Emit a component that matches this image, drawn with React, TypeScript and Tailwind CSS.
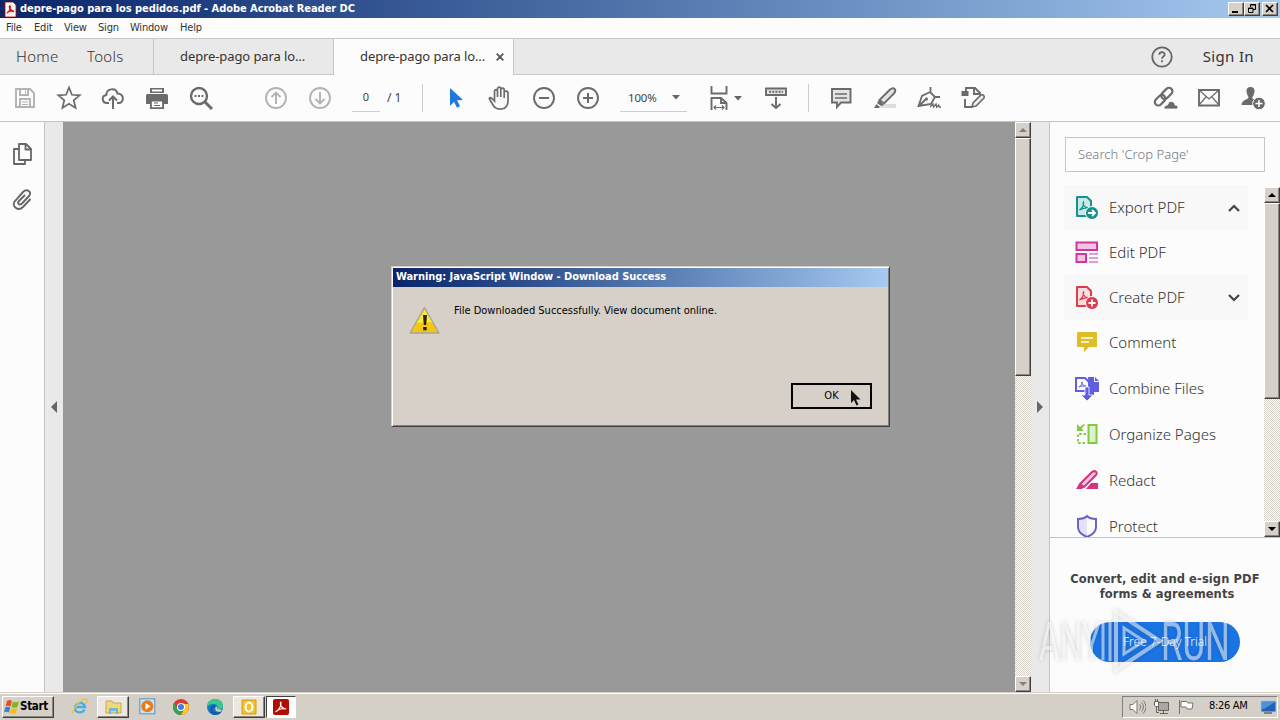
import type { ReactNode } from 'react';

const menus = [
    { label: 'File', className: 'w-[28px]' },
    { label: 'Edit', className: 'w-[30px]' },
    { label: 'View', className: 'w-[34px]' },
    { label: 'Sign', className: 'w-[32px]' },
    { label: 'Window', className: 'w-[50px]' },
    { label: 'Help', className: 'w-[30px]' },
];

const Raised = ({ className = '', children }: { className?: string; children?: ReactNode }) => (
    <div
        className={`flex shrink-0 items-center justify-center border border-t-white border-r-[#404040] border-b-[#404040] border-l-white bg-[#d6d0c8] shadow-[inset_-1px_-1px_0_#8a8680] ${className}`}
    >
        {children}
    </div>
);

const Tool = ({ children }: { children: ReactNode }) => (
    <button className="flex h-full w-11 shrink-0 items-center justify-center">
        <svg width="26" height="26" viewBox="0 0 26 26" fill="none" stroke="#6b6b6b" strokeWidth="1.9">
            {children}
        </svg>
    </button>
);

const Caret = () => (
    <svg width="8" height="5" viewBox="0 0 8 5">
        <path d="M0 0h8L4 4.6z" fill="#666" />
    </svg>
);

function TitleBar() {
    return (
        <div className="flex h-[18px] items-center bg-linear-to-r from-[#0a246a] to-[#a6caf0] pr-[2px] pl-1">
            <svg width="13" height="15" viewBox="0 0 13 15">
                <path d="M1 0h8l3 3v12H1z" fill="#fdf3f1" stroke="#b30b00" strokeWidth=".8" />
                <path
                    d="M3 11c3-2 3.500-5 3-7-1.200 0-.6 4.500 4 5.500C8 8.500 4.500 9 3 11z"
                    fill="none"
                    stroke="#d01c10"
                    strokeWidth="1.500"
                />
            </svg>
            <span className="ml-[3px] font-[DejaVu_Sans_Condensed,DejaVu_Sans,sans-serif] text-[11px] font-bold tracking-[-0.05px] whitespace-nowrap text-white">
                depre-pago para los pedidos.pdf - Adobe Acrobat Reader DC
            </span>
            <div className="ml-auto flex">
                <Raised className="h-[14px] w-4">
                    <svg width="10" height="10">
                        <path d="M1 7h6v2H1z" />
                    </svg>
                </Raised>
                <Raised className="h-[14px] w-4">
                    <svg width="10" height="10" fill="none" stroke="#000">
                        <path d="M3.500 3V.5h5v5H6M3 1h6" />
                        <path d="M1.500 4h4.500v4.500H1.500zM1 4.500h5" />
                    </svg>
                </Raised>
                <Raised className="ml-[2px] h-[14px] w-4">
                    <svg width="10" height="10" stroke="#000" strokeWidth="1.600">
                        <path d="M1 1l7 7M8 1l-7 7" />
                    </svg>
                </Raised>
            </div>
        </div>
    );
}

function TabBar() {
    return (
        <div className="flex h-[37px] border-t border-[#c8c8c8] bg-[#e9e9e9] font-[Noto_Sans,sans-serif] text-[#333]">
            <div className="flex w-[154px] items-center border-r border-b border-[#c8c8c8] pl-4 text-[15px] font-light tracking-[0.3px]">
                <span className="w-[71px]">Home</span>
                <span>Tools</span>
            </div>
            <div className="flex w-[180px] items-center border-r border-b border-[#c8c8c8] pl-[26px] text-[13px] tracking-[-0.1px]">
                depre-pago para lo...
            </div>
            <div className="flex w-[180px] items-center border-r border-[#c8c8c8] bg-[#fcfcfc] pl-[26px] text-[13px] tracking-[-0.1px]">
                <span className="w-[136px] whitespace-nowrap">depre-pago para lo...</span>
                <svg width="8" height="8" stroke="#555" strokeWidth="1.800">
                    <path d="M.7.7l6.600 6.600M7.300.7L.7 7.300" />
                </svg>
            </div>
            <div className="flex flex-1 items-center justify-end border-b border-[#c8c8c8] pr-[26px]">
                <svg width="22" height="22" viewBox="0 0 22 22" fill="none" stroke="#666" strokeWidth="1.800">
                    <circle cx="11" cy="11" r="9.700" />
                    <path d="M8.300 8.700c.2-3.500 5.600-3.200 5.400 0-.2 1.700-2.700 1.800-2.700 4.100M11 14.200v2" />
                </svg>
                <span className="ml-[30px] text-[15px] tracking-[0.35px]">Sign In</span>
            </div>
        </div>
    );
}

function Toolbar() {
    return (
        <div className="flex h-[47px] items-center border-b border-[#c4c4c4] bg-[#fcfcfc] pr-[5px] pl-[3px] font-[Noto_Sans,sans-serif] text-[12px] text-[#444]">
            <Tool>
                <g stroke="#b3b3b3">
                    <path d="M4 4h14l4 4v14H4zM8 4v6h8V4M8 22v-8h10v8" />
                    <path d="M13.500 5.500v3M10 17h6M10 19.500h6" strokeWidth="1" />
                </g>
            </Tool>
            <Tool>
                <path d="M13 2.500l2.900 7.300 7.800.5-6 5 1.900 7.700-6.600-4.200L6.400 23l1.900-7.700-6-5 7.800-.5z" strokeWidth="1.700" />
            </Tool>
            <Tool>
                <path d="M9 18H7c-5 0-6-7-.7-8C6.500 3 16 2.500 17.500 8.500c7 0 7 9.500 1 9.500H17" strokeWidth="2" />
                <path d="M13 24V12M9 15.500l4-4 4 4" strokeWidth="2" />
            </Tool>
            <Tool>
                <path d="M6 3h14v5H6z" fill="#6b6b6b" stroke="none" />
                <path d="M2 11c0-2 1-2 2-2h18c2 0 2 1 2 2v8h-4v-3H6v3H2z" fill="#6b6b6b" stroke="none" />
                <path d="M6.900 15.500h12.200v7.600H6.900z" fill="#fcfcfc" />
                <path d="M10 18h4M10 20.500h6M7.500 6.500h11" strokeWidth="1.200" />
                <path d="M8 5.500h10" stroke="#fff" strokeWidth="2" />
            </Tool>
            <Tool>
                <circle cx="11" cy="11" r="8" strokeWidth="2.400" />
                <path d="M17 17l7 7" strokeWidth="3" />
                <path d="M6.500 11h2M10 11h2M13.500 11h2" />
            </Tool>
            <div className="w-[31px]" />
            <Tool>
                <g stroke="#b3b3b3">
                    <circle cx="13" cy="13" r="10" />
                    <path d="M13 19V7.500M8.500 12L13 7.500l4.500 4.500" />
                </g>
            </Tool>
            <Tool>
                <g stroke="#b3b3b3">
                    <circle cx="13" cy="13" r="10" />
                    <path d="M13 7v11.500M8.500 14l4.500 4.500 4.500-4.500" />
                </g>
            </Tool>
            <div className="ml-[10px] flex h-[27px] w-7 items-center justify-center border-b border-[#ccc] text-[11px]">0</div>
            <span className="ml-[7px] w-[17px] text-[12px] whitespace-pre">/ 1</span>
            <div className="ml-[18px] h-7 w-px bg-[#ccc]" />
            <div className="w-[11px]" />
            <Tool>
                <path d="M7 3l13 12-6 .3 3 6-3 1.500-3-6L7 21z" fill="#1f78dd" stroke="none" />
            </Tool>
            <Tool>
                <path
                    d="M7.500 16V6.500c0-2.500 3-2.500 3 0V12 4c0-2.500 3.300-2.500 3.300 0v8-7c0-2.500 3.400-2.500 3.400 0v8-5c0-2.500 3.800-2.500 3.800 0v8c0 10-12 10-15 4l-3.500-6c-.5-2 1.500-2.500 5 2z"
                    strokeWidth="1.700"
                />
            </Tool>
            <Tool>
                <circle cx="13" cy="13" r="10" />
                <path d="M8 13h10" strokeWidth="2" />
            </Tool>
            <Tool>
                <circle cx="13" cy="13" r="10" />
                <path d="M8 13h10M13 8v10" strokeWidth="2" />
            </Tool>
            <div className="ml-[10px] flex h-[27px] w-[67px] items-center justify-between border-b border-[#ccc] pr-[7px] pl-2 text-[11.500px]">
                <span className="tracking-[-0.2px]">100%</span>
                <Caret />
            </div>
            <svg className="ml-[22px]" width="20" height="26" viewBox="0 0 20 26" fill="none" stroke="#6b6b6b" strokeWidth="1.900">
                <path d="M2.500 1v7.500h15V1M2.500 25V13h9.500l5.500 5v7M12 13v5h5.500" />
                <path d="M5 22.500h10M7 20.500l-2 2 2 2M13 20.500l2 2-2 2" strokeWidth="1.200" />
            </svg>
            <div className="mr-3 ml-[5px]">
                <Caret />
            </div>
            <Tool>
                <path d="M3 3.500h20v6.500H3z" fill="#e4e4e4" />
                <path d="M6 6.800h14" strokeWidth="2" strokeDasharray="2 1.200" />
                <path d="M13 12v11M8.500 19l4.500 4 4.500-4" />
            </Tool>
            <div className="mr-[10px] ml-[10px] h-7 w-px bg-[#ccc]" />
            <Tool>
                <path d="M4 4h18.500v13.500H13L9 22v-4.500H4z" fill="#e4e4e4" />
                <path d="M7 9h12M7 13h12" strokeWidth="1.300" />
            </Tool>
            <Tool>
                <path d="M10 19h14v4H8z" fill="#dedede" stroke="none" />
                <path d="M7.500 15L18 4.500c4-3 7 0 4 4L12 18.500z" fill="#e4e4e4" />
                <path d="M7 15l5 5-3 1-4-3zM2 23l2.500-4L8 22l-1 1z" fill="#6b6b6b" stroke="none" />
            </Tool>
            <Tool>
                <path d="M2.500 21L6 11l8-4 5 5-4 7zM3 21l8-8M14.500 7V2M19 12h5" strokeWidth="1.800" />
                <circle cx="10.500" cy="14" r="1.500" fill="#6b6b6b" stroke="none" />
                <path d="M14 22l3-3 .5 3 2.500-3 .7 3 2-2 .5 2H25" strokeWidth="1.400" />
            </Tool>
            <Tool>
                <path d="M6 6V3h9l5 5v2M14 3v6h5M5 14v8h7" />
                <path d="M1.500 6h7v5h-7z" fill="#6b6b6b" stroke="none" />
                <path d="M12 22l1-4 8-8c2-1 4 1 3 3l-8 8z" fill="#eee" strokeWidth="1.600" />
            </Tool>
            <div className="ml-auto flex h-full">
                <Tool>
                    <g transform="rotate(-45 12 12)">
                        <rect x="1" y="8" width="12" height="7" rx="3.500" strokeWidth="2.200" />
                        <rect x="10" y="8" width="13" height="7" rx="3.500" strokeWidth="2.200" />
                    </g>
                    <path d="M12 24c0-5 4-3 4-5 1-4 7-3 7 1 4 0 3 4 2 4z" fill="#6b6b6b" stroke="#fcfcfc" strokeWidth=".8" />
                </Tool>
                <Tool>
                    <path d="M3 5h20v15.500H3z" />
                    <path d="M3 5l10 9 10-9M3 20l7-8M23 20l-7-8" strokeWidth="1.200" />
                </Tool>
                <Tool>
                    <path
                        d="M10.500 2C4.500 2 6.500 9 8.500 12c0 3-6.500 2-7 8h13v-6c-2 0-2.500-.5-2-2 2-3 4-10-2-10z"
                        fill="#6b6b6b"
                        stroke="none"
                    />
                    <circle cx="19" cy="18.500" r="6.300" fill="#6b6b6b" stroke="#fcfcfc" strokeWidth="1" />
                    <path d="M15.500 18.500h7M19 15v7" stroke="#fff" strokeWidth="1.500" />
                </Tool>
            </div>
        </div>
    );
}

const Track = ({ children, className = '' }: { children: ReactNode; className?: string }) => (
    <div
        className={`flex w-4 shrink-0 flex-col bg-[#fff] bg-[conic-gradient(#d4d0c8_25%,transparent_0_50%,#d4d0c8_0_75%,transparent_0)] bg-size-[2px_2px] ${className}`}
    >
        {children}
    </div>
);

const Arrow = ({ down = false, dim = false }: { down?: boolean; dim?: boolean }) => (
    <svg width="8" height="4" viewBox="0 0 8 4">
        <path d={down ? 'M0 0h8L4 4z' : 'M0 4h8L4 0z'} fill={dim ? '#808080' : '#000'} />
    </svg>
);

const PdfPage = ({ color, fill, plus = false }: { color: string; fill: string; plus?: boolean }) => (
    <>
        <path d="M2 2h10l4 4v15H2z" fill={fill} stroke={color} strokeWidth="2" strokeLinejoin="round" />
        <path d="M4.500 15c3-2 4.500-5 4-8-1 1-.5 5 5 6-3-.5-6 .5-9 2z" fill="none" stroke={color} strokeWidth="1.200" />
        <circle cx="17" cy="18" r="6.500" fill={color} stroke="#fcfcfc" strokeWidth="1" />
        <path d={plus ? 'M13.500 18h7M17 14.500v7' : 'M13 18h6.500M17 15l3 3-3 3'} fill="none" stroke="#fff" strokeWidth="1.800" />
    </>
);

const tools = [
    { label: 'Export PDF', row: 'h-[45px] bg-[#f8f8f8]', arrow: 'up', icon: <PdfPage color="#159190" fill="#c7e9e8" /> },
    {
        label: 'Edit PDF',
        row: 'h-[45px]',
        icon: (
            <>
                <path d="M1.500 2.500h20.500v7.500H1.500zM1.500 14h9.500v8H1.500z" fill="#f6c3e4" stroke="#d0379c" strokeWidth="2" />
                <path d="M14 14h9M14 18h9M14 22h9" stroke="#d0379c" strokeWidth="1.200" />
            </>
        ),
    },
    { label: 'Create PDF', row: 'h-[45px] bg-[#f8f8f8]', arrow: 'down', icon: <PdfPage color="#dc3d4e" fill="#fbdcdd" plus /> },
    {
        label: 'Comment',
        row: 'h-[45px]',
        icon: (
            <>
                <path d="M3 2h18c1 0 1 1 1 1v13c0 1-1 1-1 1h-7l-5 5v-5H3c-1 0-1-1-1-1V3s0-1 1-1z" fill="#e0bd27" />
                <path d="M6 8h12M6 12h8" stroke="#fff" strokeWidth="1.600" />
            </>
        ),
    },
    {
        label: 'Combine Files',
        row: 'h-[46px]',
        icon: (
            <>
                <path d="M13 1h6v5h5v10h-5v3h-5z" fill="#615de0" />
                <path d="M20 1l4 4h-4z" fill="#615de0" />
                <path d="M1 2h9l4 4v9H1z" fill="#fcfcfc" stroke="#615de0" strokeWidth="2" />
                <path d="M4 11c2-1 3-3 3-5 0 3 2 4 4 4-3 0-5 0-7 1z" fill="none" stroke="#615de0" />
                <path d="M10 11h4v8h4l-6 6-6-6h4z" fill="#615de0" stroke="#fcfcfc" strokeWidth=".8" />
            </>
        ),
    },
    {
        label: 'Organize Pages',
        row: 'h-[46px]',
        icon: (
            <>
                <path d="M13.500 3h8v18h-8z" fill="#ddf2c8" stroke="#83c744" strokeWidth="2" />
                <path d="M11 12H3v9h8" fill="none" stroke="#83c744" strokeWidth="1.800" strokeDasharray="2.500 1.800" />
                <path d="M2 2v7h7l-2.500-2.500L10 3 9 2 5 5z" fill="#83c744" />
            </>
        ),
    },
    {
        label: 'Redact',
        row: 'h-[46px]',
        icon: (
            <>
                <path d="M1 21l3-5 5 3-2 2zM11 21l5-6h7v6z" fill="#d3357f" />
                <path d="M5 16L17 4c3-2 6 0 4 3L9 19z" fill="#f7c6dd" stroke="#d3357f" strokeWidth="2" />
            </>
        ),
    },
    {
        label: 'Protect',
        row: 'h-[46px]',
        icon: (
            <>
                <path d="M3 5c4 0 7-1 9-3 2 2 5 3 9 3v8c0 5-4 8-9 10-5-2-9-5-9-10z" fill="#fcfcfc" />
                <path d="M12 2v21c-5-2-9-5-9-10V5c4 0 7-1 9-3z" fill="#e3e2fa" />
                <path d="M3 5c4 0 7-1 9-3 2 2 5 3 9 3v8c0 5-4 8-9 10-5-2-9-5-9-10z" fill="none" stroke="#625fc9" strokeWidth="1.900" />
            </>
        ),
    },
];

function ToolsPanel() {
    return (
        <aside className="flex w-[231px] shrink-0 flex-col border-l border-[#c4c4c4] bg-[#fcfcfc] font-[Noto_Sans,sans-serif]">
            <div className="mx-[15px] mt-[15px] flex h-[35px] shrink-0 items-center border border-[#c6c6c6] pl-3 text-[13px] font-light tracking-[0.05px] text-[#777]">
                Search 'Crop Page'
            </div>
            <div className="mt-[13px] flex h-[353px] shrink-0 overflow-hidden border-b border-[#c4c4c4]">
                <div className="ml-[14px] w-[184px]">
                    {tools.map((tool) => (
                        <div key={tool.label} className={`flex items-center pr-2 pl-[11px] text-[15px] font-light text-[#333] ${tool.row}`}>
                            <svg width="24" height="25" viewBox="0 0 24 25" className="shrink-0">
                                {tool.icon}
                            </svg>
                            <span className="ml-[10px] whitespace-nowrap">{tool.label}</span>
                            {tool.arrow && (
                                <svg className="ml-auto" width="12" height="8" fill="none" stroke="#444" strokeWidth="2.200">
                                    <path d={tool.arrow === 'up' ? 'M1 7l5-5 5 5' : 'M1 1l5 5 5-5'} />
                                </svg>
                            )}
                        </div>
                    ))}
                </div>
                <Track className="mt-[2px] ml-auto">
                    <Raised className="h-4">
                        <Arrow />
                    </Raised>
                    <Raised className="h-[196px]" />
                    <Raised className="mt-auto h-4">
                        <Arrow down />
                    </Raised>
                </Track>
            </div>
            <p className="mt-[34px] text-center font-[DejaVu_Sans,sans-serif] text-[11.500px] leading-[15px] font-bold tracking-[0.1px] text-[#444]">
                Convert, edit and e-sign PDF
                <br />
                &nbsp;forms &amp; agreements
            </p>
            <button className="mt-5 ml-10 h-10 w-[150px] rounded-full bg-[#1b74e4] text-[12px] font-light text-white">Free 7-Day Trial</button>
        </aside>
    );
}

function Watermark() {
    return (
        <svg
            className="absolute top-[604px] left-[1034px] drop-shadow-[0_0_2px_rgba(0,0,0,0.3)]"
            width="206"
            height="74"
            fill="#fff"
            fillOpacity=".55"
            fontFamily="Roboto, sans-serif"
            fontSize="53"
        >
            <text x="5" y="56" textLength="62" lengthAdjust="spacingAndGlyphs">
                ANY
            </text>
            <text x="127" y="56" textLength="69" lengthAdjust="spacingAndGlyphs">
                RUN
            </text>
            <g fill="none" stroke="#fff" strokeOpacity=".55" strokeWidth="4">
                <path d="M69 18v38M76 17v40" strokeWidth="3" />
                <path d="M82 8l44 29-44 29z" />
                <path d="M90 24v26l20-13z" strokeWidth="3" />
            </g>
        </svg>
    );
}

function WarningDialog() {
    return (
        <div className="absolute top-[266px] left-[391px] flex h-[161px] w-[499px] flex-col border border-t-[#d4d0c8] border-r-[#404040] border-b-[#404040] border-l-[#d4d0c8] bg-[#d6d0c9] p-px shadow-[inset_1px_1px_0_#fff,inset_-1px_-1px_0_#808080]">
            <div className="flex h-[19px] items-center bg-linear-to-r from-[#0a246a] to-[#a6caf0] pl-[3px] font-[DejaVu_Sans_Condensed,DejaVu_Sans,sans-serif] text-[11px] font-bold tracking-[-0.05px] text-white">
                Warning: JavaScript Window - Download Success
            </div>
            <div className="flex pt-[17px] pl-4">
                <svg className="mt-[2px]" width="31" height="29" viewBox="0 0 31 29">
                    <path d="M15.500 1.500L30 27H1z" fill="#f3c613" stroke="#a4a4a4" strokeWidth="1.300" strokeLinejoin="round" />
                    <path d="M15.500 4L8 17l15-1z" fill="#fbea3a" />
                    <path d="M14 9h4l-.8 10h-2.400z" fill="#2c2606" />
                    <path d="M14.200 21h3.500v3.300h-3.500z" fill="#2c2606" />
                </svg>
                <p className="ml-[14px] font-[DejaVu_Sans_Condensed,DejaVu_Sans,sans-serif] text-[11px] leading-[14px] text-black">
                    File Downloaded Successfully. View document online.
                </p>
            </div>
            <button className="mt-auto mr-4 mb-4 flex h-[26px] w-[81px] items-center justify-center self-end border-2 border-black font-[DejaVu_Sans_Condensed,DejaVu_Sans,sans-serif] text-[11px]">
                OK
            </button>
            <svg className="absolute top-[122px] left-[458px]" width="12" height="18" viewBox="0 0 12 18">
                <path d="M1 1v13l3-3 2.500 5.500 2-1L6 10.500h4.500z" fill="#111" />
            </svg>
        </div>
    );
}

function AcrobatLogo() {
    return (
        <svg width="16" height="16" viewBox="0 0 16 16">
            <rect width="16" height="16" rx="2" fill="#b30b00" />
            <path
                d="M3 12.500c2.500-.5 5.500-6 5-9.500-1.500 0-.8 6.500 5 7-3-1-8 0-10 2.500z"
                fill="none"
                stroke="#fff"
                strokeWidth="1.100"
            />
        </svg>
    );
}

function Taskbar() {
    return (
        <div className="flex h-7 items-center border-t border-[#d4d0c8] bg-[#d4d0c8] px-[2px] font-[DejaVu_Sans_Condensed,DejaVu_Sans,sans-serif] text-[11px] text-black shadow-[inset_0_1px_0_#fff]">
            <Raised className="mt-px h-[22px] w-[52px] justify-start pl-px">
                <svg width="16" height="16" viewBox="0 0 16 16">
                    <path d="M3 2c2-1.500 3.500-1 5 0L6.500 7.500c-2-1-3.500-1-5 0z" fill="#e45124" />
                    <path d="M9 2.500c2 1 3.500 1 6 0L13.500 8c-2 1-3.500 1-6 0z" fill="#7bb829" />
                    <path d="M1.200 8.500c2-1 3.500-1 5 0L5 13.500c-2-1-3.500-1-5 0z" fill="#3a7fd5" />
                    <path d="M7.200 9c2 1 4 1 6 0L12 14c-2 1-4 1-6 0z" fill="#f6bd19" />
                </svg>
                <span className="text-[11.500px] font-bold tracking-[-0.3px]">Start</span>
            </Raised>
            <svg className="ml-[17px]" width="17" height="17" viewBox="0 0 17 17" fill="none">
                <path d="M13.500 11.500c-2 4-9 4-9.500-1-.5-6 9-8 10-1.500H5" stroke="#45aee8" strokeWidth="2.300" />
                <path d="M2 14c-3 5 4-13 13-13 3 1-1 5-1 5" stroke="#edc53c" strokeWidth="1.300" />
            </svg>
            <Raised className="ml-[9px] h-[22px] w-8 bg-[#ebe8e3]">
                <svg width="17" height="16" viewBox="0 0 17 16">
                    <path d="M1 2h6l1 2h8v10H1z" fill="#f0d77a" stroke="#c9a94b" />
                    <path d="M4 15V9h9v6h-2v-3H6v3z" fill="#6eb8e0" />
                </svg>
            </Raised>
            <svg className="ml-[10px]" width="17" height="17" viewBox="0 0 17 17">
                <rect x=".8" y=".8" width="15" height="15" fill="#c6e3f6" stroke="#5593c3" />
                <circle cx="8.300" cy="8.300" r="6" fill="#ec7b16" />
                <path d="M6.500 5l5 3.300-5 3.400z" fill="#fff" />
            </svg>
            <svg className="ml-[17px]" width="16" height="16" viewBox="0 0 16 16">
                <circle cx="8" cy="8" r="8" fill="#e2382b" />
                <path d="M1 4a8 8 0 0 0 7 12l3.500-6L8 8 4 9z" fill="#32a350" />
                <path d="M15.200 5A8 8 0 0 1 8 16l3.500-6L11 5z" fill="#fccb20" />
                <circle cx="8" cy="8" r="4" fill="#fff" />
                <circle cx="8" cy="8" r="3" fill="#3e7be6" />
            </svg>
            <svg className="ml-[18px]" width="16" height="16" viewBox="0 0 16 16">
                <circle cx="8" cy="8" r="8" fill="#147bc8" />
                <path d="M0 8C0-2 16-3 16 7c0 3-3 4-6 3 2-2 0-5-3-5S1 6 0 8z" fill="#3dc68c" />
                <path d="M6 9c-1 4 4 6 9 3-1 3-5 4-7 4-6 0-6-9-2-10 3 0 4 2 3 3z" fill="#155aa4" />
                <path d="M8.500 8c1-1 2 0 1.500 2l5 1-1 1.500c-4 1-6.500-1-5.500-4.500z" fill="#d4d0c8" />
            </svg>
            <Raised className="ml-[10px] h-[22px] w-8 bg-[#ebe8e3]">
                <svg width="16" height="16" viewBox="0 0 16 16">
                    <path d="M1 1h14v14H1z" fill="#f2c230" stroke="#d49a10" />
                    <ellipse cx="8" cy="8" rx="3.500" ry="4.500" fill="none" stroke="#fff" strokeWidth="2" />
                </svg>
            </Raised>
            <div className="ml-px flex h-[22px] w-[30px] items-center justify-center border border-t-[#404040] border-r-white border-b-white border-l-[#404040] bg-white">
                <AcrobatLogo />
            </div>
            <div className="ml-auto flex h-[22px] w-[156px] items-center border border-t-[#808080] border-r-white border-b-white border-l-[#808080] pl-[6px]">
                <svg width="17" height="16" viewBox="0 0 17 16" fill="none" stroke="#77736d">
                    <path d="M1 5.500h3l4-4v13l-4-4H1z" fill="#fff" />
                    <path d="M10.500 5.500c1.500 1.500 1.500 4 0 5.500M12.500 3.500c2.500 2.500 2.500 6.500 0 9M14 1.500c4 4 4 9 0 13" />
                </svg>
                <svg className="ml-[7px]" width="17" height="16" viewBox="0 0 17 16" stroke="#65615b">
                    <path d="M5.500 3.500h10v8h-10z" fill="#a9a7a4" />
                    <path d="M7 14.500h8M10.500 11v3M3.500 8v5.500H6" fill="none" />
                    <path d="M1.500 2.500h4v4l-1 1h-2l-1-1zM2.500 0v2.500M4.500 0v2.500" fill="#fff" />
                </svg>
                <svg className="ml-[8px]" width="16" height="16" viewBox="0 0 16 16" stroke="#77736d">
                    <path d="M1.500 1v14M3 2.500h6l1 1.500h5l-1 6H9l-1-2H3z" fill="#fff" />
                </svg>
                <span className="ml-[15px] tracking-[-0.3px] whitespace-nowrap">8:26 AM</span>
                <svg className="ml-auto shrink-0" width="17" height="14" viewBox="0 0 17 14">
                    <path d="M1 1h15v11H1z" fill="#1f62b8" stroke="#b4cbe5" />
                    <path d="M2 2h13L4 9H2z" fill="#4d91d7" />
                    <path d="M4 13h8" stroke="#333" />
                </svg>
            </div>
        </div>
    );
}

export default function App() {
    return (
        <div className="relative flex h-[720px] w-[1280px] flex-col overflow-hidden bg-[#fcfcfc]">
            <TitleBar />
            <nav className="flex h-5 items-center bg-[#fcfcfc] pl-[6px] font-[DejaVu_Sans_Condensed,DejaVu_Sans,sans-serif] text-[11px] tracking-[-0.2px] text-[#333]">
                {menus.map((menu) => (
                    <span key={menu.label} className={menu.className}>
                        {menu.label}
                    </span>
                ))}
            </nav>
            <TabBar />
            <Toolbar />
            <main className="flex h-[570px]">
                <div className="flex w-[45px] flex-col items-center border-r border-[#c4c4c4] bg-[#fcfcfc] pt-5">
                    <svg width="22" height="24" viewBox="0 0 22 24" fill="none" stroke="#666" strokeWidth="1.800">
                        <path d="M8 2h7l5 5v11H8zM14.500 2v5.500H20M8 7H3v15h11v-4" strokeLinejoin="round" />
                    </svg>
                    <svg className="mt-[22px]" width="22" height="24" viewBox="0 0 22 24" fill="none" stroke="#666" strokeWidth="1.900">
                        <path d="M19.500 11l-7.500 8c-5 5-12-1-8-6L12 4c4-4 9.500 0 6 4l-7 7.500c-3 2.500-5-.5-3-2.500l6-6" />
                    </svg>
                </div>
                <div className="flex w-[18px] items-center justify-center bg-[#e9e9e9]">
                    <svg width="6" height="12">
                        <path d="M6 0v12L0 6z" fill="#666" />
                    </svg>
                </div>
                <div className="flex-1 bg-[#999]" />
                <Track>
                    <Raised className="h-4">
                        <Arrow dim />
                    </Raised>
                    <Raised className="h-[238px]" />
                    <Raised className="mt-auto h-4">
                        <Arrow down dim />
                    </Raised>
                </Track>
                <div className="flex w-[18px] items-center justify-center bg-[#e9e9e9]">
                    <svg width="6" height="12">
                        <path d="M0 0v12l6-6z" fill="#666" />
                    </svg>
                </div>
                <ToolsPanel />
            </main>
            <Taskbar />
            <WarningDialog />
            <Watermark />
        </div>
    );
}
